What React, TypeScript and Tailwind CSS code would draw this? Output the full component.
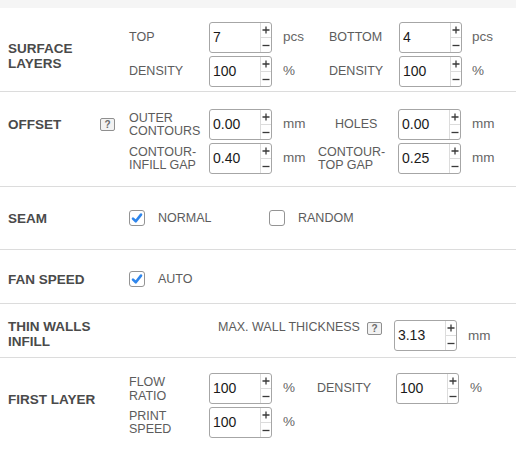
import React from 'react';

function Spin({ value }: { value: string }) {
  return (
    <div className="flex h-[31px] w-[63px] shrink-0 rounded-[3px] border border-[#a6a6a6] bg-white">
      <div className="flex flex-1 items-center pl-[3px] text-[14px] text-[#1a1a1a]">{value}</div>
      <div className="flex w-[11px] flex-col border-l border-[#dcdcdc]">
        <span className="flex flex-1 items-center justify-center border-b border-[#dcdcdc]">
          <svg viewBox="0 0 8 8" className="h-[8px] w-[8px]">
            <path d="M4 0.5 V7.5 M0.5 4 H7.5" stroke="#3a3a3a" strokeWidth="1.3" fill="none" />
          </svg>
        </span>
        <span className="flex flex-1 items-center justify-center">
          <svg viewBox="0 0 8 8" className="h-[8px] w-[8px]">
            <path d="M0.5 4.5 H7.5" stroke="#3a3a3a" strokeWidth="1.3" fill="none" />
          </svg>
        </span>
      </div>
    </div>
  );
}

function Check({ checked }: { checked?: boolean }) {
  return (
    <span className="flex h-[16px] w-[16px] shrink-0 items-center justify-center rounded-[3px] border border-[#949494] bg-white">
      {checked && (
        <svg viewBox="0 0 12 12" className="h-[12px] w-[12px]">
          <path d="M2 6.6 L4.8 9.3 L10 2.6" fill="none" stroke="#2f86ec" strokeWidth="2.6" strokeLinecap="round" strokeLinejoin="round" />
        </svg>
      )}
    </span>
  );
}

function Help() {
  return (
    <span className="flex h-[13px] w-[15px] shrink-0 items-center justify-center rounded-[2px] border border-[#8f8f8f] bg-[#f2f2f2] text-[10px] font-bold leading-none text-[#6a6a6a]">
      ?
    </span>
  );
}

const title = 'text-[13.5px] font-bold leading-[15px] text-[#4a4a4a]';
const label = 'text-[12.5px] leading-[13px] text-[#5c5c5c]';
const unit = 'text-[13.5px] text-[#666]';

export default function App() {
  return (
    <div className="w-[516px] bg-white font-['Liberation_Sans',Arial,sans-serif]">
      <div className="h-[8px] bg-[#f5f5f5]" />

      {/* surface layers */}
      <div className="flex h-[84px] border-b border-[#dcdcdc] pl-[8px] pt-[14px]">
        <div className={`w-[121px] pt-[19px] ${title}`}>SURFACE<br />LAYERS</div>
        <div className="flex flex-col gap-[3px]">
          <div className="flex h-[31px] items-center">
            <span className={`w-[80px] ${label}`}>TOP</span>
            <Spin value="7" />
            <span className={`w-[57px] pl-[11px] ${unit}`}>pcs</span>
            <span className={`w-[70px] ${label}`}>BOTTOM</span>
            <Spin value="4" />
            <span className={`pl-[10px] ${unit}`}>pcs</span>
          </div>
          <div className="flex h-[31px] items-center">
            <span className={`w-[80px] ${label}`}>DENSITY</span>
            <Spin value="100" />
            <span className={`w-[57px] pl-[11px] ${unit}`}>%</span>
            <span className={`w-[70px] ${label}`}>DENSITY</span>
            <Spin value="100" />
            <span className={`pl-[10px] ${unit}`}>%</span>
          </div>
        </div>
      </div>

      {/* offset */}
      <div className="flex h-[95px] border-b border-[#dcdcdc] pl-[8px] pt-[17px]">
        <div className="flex w-[121px] items-start">
          <span className={`mt-[8px] w-[92px] ${title}`}>OFFSET</span>
          <span className="mt-[9px]"><Help /></span>
        </div>
        <div className="flex flex-col gap-[3px]">
          <div className="flex h-[31px] items-center">
            <span className={`w-[80px] ${label}`}>OUTER<br />CONTOURS</span>
            <Spin value="0.00" />
            <span className={`w-[46px] pl-[11px] ${unit}`}>mm</span>
            <span className={`w-[80px] pl-[17px] ${label}`}>HOLES</span>
            <Spin value="0.00" />
            <span className={`pl-[11px] ${unit}`}>mm</span>
          </div>
          <div className="flex h-[31px] items-center">
            <span className={`w-[80px] ${label}`}>CONTOUR-<br />INFILL GAP</span>
            <Spin value="0.40" />
            <span className={`w-[46px] pl-[11px] ${unit}`}>mm</span>
            <span className={`w-[80px] ${label}`}>CONTOUR-<br />TOP GAP</span>
            <Spin value="0.25" />
            <span className={`pl-[11px] ${unit}`}>mm</span>
          </div>
        </div>
      </div>

      {/* seam */}
      <div className="flex h-[63px] items-center border-b border-[#dcdcdc] pl-[8px]">
        <span className={`w-[121px] ${title}`}>SEAM</span>
        <div className="flex w-[140px] items-center gap-[13px]">
          <Check checked />
          <span className={label}>NORMAL</span>
        </div>
        <div className="flex items-center gap-[13px]">
          <Check />
          <span className={label}>RANDOM</span>
        </div>
      </div>

      {/* fan speed */}
      <div className="flex h-[54px] items-center border-b border-[#dcdcdc] pl-[8px] pt-[5px]">
        <span className={`w-[121px] ${title}`}>FAN SPEED</span>
        <div className="flex items-center gap-[13px]">
          <Check checked />
          <span className={label}>AUTO</span>
        </div>
      </div>

      {/* thin walls */}
      <div className="flex h-[54px] items-start border-b border-[#dcdcdc] pl-[8px] pt-[16px]">
        <span className={`mt-[-1px] w-[121px] ${title} leading-[15.5px]`}>THIN WALLS<br />INFILL</span>
        <span className="ml-[89px] text-[12.5px] leading-[15px] text-[#5c5c5c]">MAX. WALL THICKNESS</span>
        <span className="ml-[7px] mt-[2px]"><Help /></span>
        <span className="ml-[12px]"><Spin value="3.13" /></span>
        <span className={`pl-[11px] leading-[31px] ${unit}`}>mm</span>
      </div>

      {/* first layer */}
      <div className="flex h-[94px] items-start pl-[8px] pt-[15px]">
        <span className={`mt-[19px] w-[121px] ${title}`}>FIRST LAYER</span>
        <div className="flex flex-col gap-[3px]">
          <div className="flex h-[31px] items-center">
            <span className={`w-[80px] ${label} leading-[14px]`}>FLOW<br />RATIO</span>
            <Spin value="100" />
            <span className={`w-[45px] pl-[11px] ${unit}`}>%</span>
            <span className={`w-[79px] ${label}`}>DENSITY</span>
            <Spin value="100" />
            <span className={`pl-[11px] ${unit}`}>%</span>
          </div>
          <div className="flex h-[31px] items-center">
            <span className={`w-[80px] ${label}`}>PRINT<br />SPEED</span>
            <Spin value="100" />
            <span className={`w-[45px] pl-[11px] ${unit}`}>%</span>
          </div>
        </div>
      </div>
    </div>
  );
}
